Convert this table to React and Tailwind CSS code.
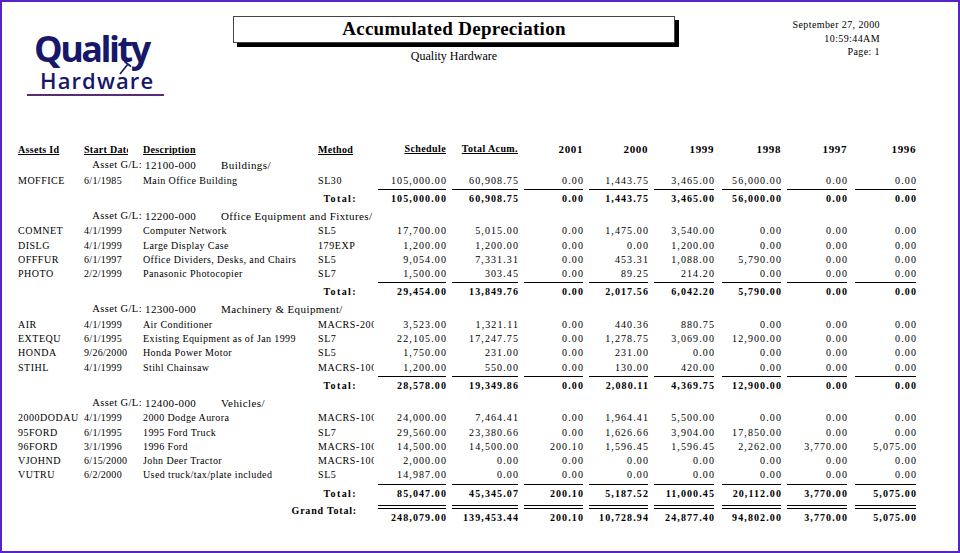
import React from "react";

const NUM_COLS = [
  "w-[68px]",
  "ml-[6px] w-[66px]",
  "ml-[6px] w-[59px]",
  "ml-[6px] w-[59px]",
  "ml-[6px] w-[60px]",
  "ml-[8px] w-[59px]",
  "ml-[6px] w-[60px]",
  "ml-[8px] w-[61px]",
];

const groups = [
  {
    code: "12100-000",
    name: "Buildings/",
    rows: [
      ["MOFFICE", "6/1/1985", "Main Office Building", "SL30", ["105,000.00", "60,908.75", "0.00", "1,443.75", "3,465.00", "56,000.00", "0.00", "0.00"]],
    ],
    total: ["105,000.00", "60,908.75", "0.00", "1,443.75", "3,465.00", "56,000.00", "0.00", "0.00"],
  },
  {
    code: "12200-000",
    name: "Office Equipment and Fixtures/",
    rows: [
      ["COMNET", "4/1/1999", "Computer Network", "SL5", ["17,700.00", "5,015.00", "0.00", "1,475.00", "3,540.00", "0.00", "0.00", "0.00"]],
      ["DISLG", "4/1/1999", "Large Display Case", "179EXP", ["1,200.00", "1,200.00", "0.00", "0.00", "1,200.00", "0.00", "0.00", "0.00"]],
      ["OFFFUR", "6/1/1997", "Office Dividers, Desks, and Chairs", "SL5", ["9,054.00", "7,331.31", "0.00", "453.31", "1,088.00", "5,790.00", "0.00", "0.00"]],
      ["PHOTO", "2/2/1999", "Panasonic Photocopier", "SL7", ["1,500.00", "303.45", "0.00", "89.25", "214.20", "0.00", "0.00", "0.00"]],
    ],
    total: ["29,454.00", "13,849.76", "0.00", "2,017.56", "6,042.20", "5,790.00", "0.00", "0.00"],
  },
  {
    code: "12300-000",
    name: "Machinery & Equipment/",
    rows: [
      ["AIR", "4/1/1999", "Air Conditioner", "MACRS-200DB", ["3,523.00", "1,321.11", "0.00", "440.36", "880.75", "0.00", "0.00", "0.00"]],
      ["EXTEQU", "6/1/1995", "Existing Equipment as of Jan 1999", "SL7", ["22,105.00", "17,247.75", "0.00", "1,278.75", "3,069.00", "12,900.00", "0.00", "0.00"]],
      ["HONDA", "9/26/2000", "Honda Power Motor", "SL5", ["1,750.00", "231.00", "0.00", "231.00", "0.00", "0.00", "0.00", "0.00"]],
      ["STIHL", "4/1/1999", "Stihl Chainsaw", "MACRS-100DB", ["1,200.00", "550.00", "0.00", "130.00", "420.00", "0.00", "0.00", "0.00"]],
    ],
    total: ["28,578.00", "19,349.86", "0.00", "2,080.11", "4,369.75", "12,900.00", "0.00", "0.00"],
  },
  {
    code: "12400-000",
    name: "Vehicles/",
    rows: [
      ["2000DODAU", "4/1/1999", "2000 Dodge Aurora", "MACRS-100DB", ["24,000.00", "7,464.41", "0.00", "1,964.41", "5,500.00", "0.00", "0.00", "0.00"]],
      ["95FORD", "6/1/1995", "1995 Ford Truck", "SL7", ["29,560.00", "23,380.66", "0.00", "1,626.66", "3,904.00", "17,850.00", "0.00", "0.00"]],
      ["96FORD", "3/1/1996", "1996 Ford", "MACRS-100DB", ["14,500.00", "14,500.00", "200.10", "1,596.45", "1,596.45", "2,262.00", "3,770.00", "5,075.00"]],
      ["VJOHND", "6/15/2000", "John Deer Tractor", "MACRS-100DB", ["2,000.00", "0.00", "0.00", "0.00", "0.00", "0.00", "0.00", "0.00"]],
      ["VUTRU", "6/2/2000", "Used truck/tax/plate included", "SL5", ["14,987.00", "0.00", "0.00", "0.00", "0.00", "0.00", "0.00", "0.00"]],
    ],
    total: ["85,047.00", "45,345.07", "200.10", "5,187.52", "11,000.45", "20,112.00", "3,770.00", "5,075.00"],
  },
];

const grand = ["248,079.00", "139,453.44", "200.10", "10,728.94", "24,877.40", "94,802.00", "3,770.00", "5,075.00"];
const years = ["2001", "2000", "1999", "1998", "1997", "1996"];

const Logo = () => (
  <div className="relative ml-[25px] mt-[27px] w-[137px] flex flex-col" style={{ fontFamily: "'Open Sans', sans-serif" }}>
    <div className="ml-[7px] text-[36px] leading-[40px] font-bold tracking-[-2.5px] text-[#18186a]">Quality</div>
    <div className="ml-[13px] -mt-[2px] text-[22px] leading-[26px] font-semibold tracking-[1.1px] text-[#18186a]">Hardware</div>
    <div className="mt-[1px] h-[2px] bg-[#5a2c74]" />
    {/* little hammer between the t and the w */}
    <svg className="absolute left-[90px] top-[31px]" width="16" height="16" viewBox="0 0 16 16">
      <line x1="3" y1="14" x2="11" y2="4" stroke="#18186a" strokeWidth="1.6" />
      <line x1="7.5" y1="1.5" x2="14" y2="6.5" stroke="#18186a" strokeWidth="1.8" />
    </svg>
  </div>
);

const Nums = ({ values, bold, line }) => (
  <>
    {values.map((v, i) => (
      <div
        key={i}
        className={`${NUM_COLS[i]} text-right tracking-[1.1px] ${bold ? "font-bold" : ""} ${line ? "border-t border-black h-[18px] leading-[17px]" : ""}`}
      >
        <span className="-mr-[1px]">{v}</span>
      </div>
    ))}
  </>
);

const DataRow = ({ row }) => (
  <div className="flex h-[14.25px] leading-[14.25px] whitespace-nowrap">
    <div className="w-[66px] tracking-[0.5px]">{row[0]}</div>
    <div className="w-[45px] overflow-hidden tracking-[0.3px]">{row[1]}</div>
    <div className="ml-[14px] w-[175px] overflow-hidden tracking-[0.4px]">{row[2]}</div>
    <div className="w-[56px] overflow-hidden tracking-[0.6px]">{row[3]}</div>
    <div className="ml-[4px] flex">
      <Nums values={row[4]} />
    </div>
  </div>
);

const Group = ({ g }) => (
  <div className="flex flex-col">
    <div className="mt-[0.5px] flex h-[17px] items-center whitespace-nowrap text-[11px] tracking-[0.4px]">
      <div className="w-[124px] text-right text-[10.5px] tracking-[0.4px]">Asset G/L:</div>
      <div className="ml-[3px] w-[76px]">{g.code}</div>
      <div className="w-[154px] overflow-hidden">{g.name}</div>
    </div>
    {g.rows.map((r) => (
      <DataRow key={r[0]} row={r} />
    ))}
    <div className="mt-[1px] flex">
      <div className="w-[356px] pr-[17px] text-right font-bold pt-[1px] leading-[17px] tracking-[1.4px]">Total:</div>
      <div className="ml-[4px] flex">
        <Nums values={g.total} bold line />
      </div>
    </div>
  </div>
);

export default function App() {
  return (
    <div
      className="w-[960px] h-[553px] border-2 border-[#5523c9] bg-white text-black overflow-hidden flex flex-col"
      style={{ fontFamily: "'Liberation Serif', 'Times New Roman', serif" }}
    >
      {/* HEADER */}
      <div className="flex h-[140px]">
        <Logo />
        <div className="ml-[69px] mt-[14px] flex flex-col items-center w-[446px]">
          <div className="w-[442px] self-start h-[27px] border border-[#444] bg-white shadow-[4px_4px_0_#000] flex items-center justify-center text-[19px] font-bold tracking-[0.3px]">
            Accumulated Depreciation
          </div>
          <div className="mt-[6px] -ml-[4px] text-[12px] leading-[14px]">Quality Hardware</div>
        </div>
        <div className="flex-1 pr-[78px] pt-[16px] text-right text-[10px] leading-[13.5px] tracking-[0.4px]">
          <div>September 27, 2000</div>
          <div>10:59:44AM</div>
          <div>Page: 1</div>
        </div>
      </div>

      {/* TABLE */}
      <div className="pl-[16px] text-[10px]">
        <div className="flex h-[14px] items-center whitespace-nowrap font-bold">
          <div className="w-[66px] underline tracking-[0.3px]">Assets Id</div>
          <div className="w-[44px] overflow-hidden underline tracking-[0.3px]">Start Date</div>
          <div className="ml-[15px] w-[175px] underline tracking-[0.3px]">Description</div>
          <div className="w-[56px] underline tracking-[0.3px]">Method</div>
          <div className="ml-[4px] flex">
            <div className="w-[68px] text-right underline tracking-[0.4px]">Schedule</div>
            <div className="ml-[6px] w-[66px] text-right underline tracking-[0.4px]">Total Acum.</div>
            {years.map((y, i) => (
              <div key={y} className={`${NUM_COLS[i + 2]} text-right text-[11px] tracking-[0.6px]`}>
                {y}
              </div>
            ))}
          </div>
        </div>

        {groups.map((g) => (
          <Group key={g.code} g={g} />
        ))}

        <div className="mt-[2px] flex">
          <div className="w-[356px] pr-[17px] text-right font-bold leading-[14px] tracking-[0.8px]">Grand Total:</div>
          <div className="ml-[4px] flex">
            {grand.map((v, i) => (
              <div key={i} className={`${NUM_COLS[i]} flex flex-col`}>
                <div className="mt-[1px] h-[4px] border-y border-black" />
                <div className="pt-[2px] text-right font-bold leading-[14px] tracking-[1.1px]">
                  <span className="-mr-[1px]">{v}</span>
                </div>
              </div>
            ))}
          </div>
        </div>
      </div>
    </div>
  );
}
